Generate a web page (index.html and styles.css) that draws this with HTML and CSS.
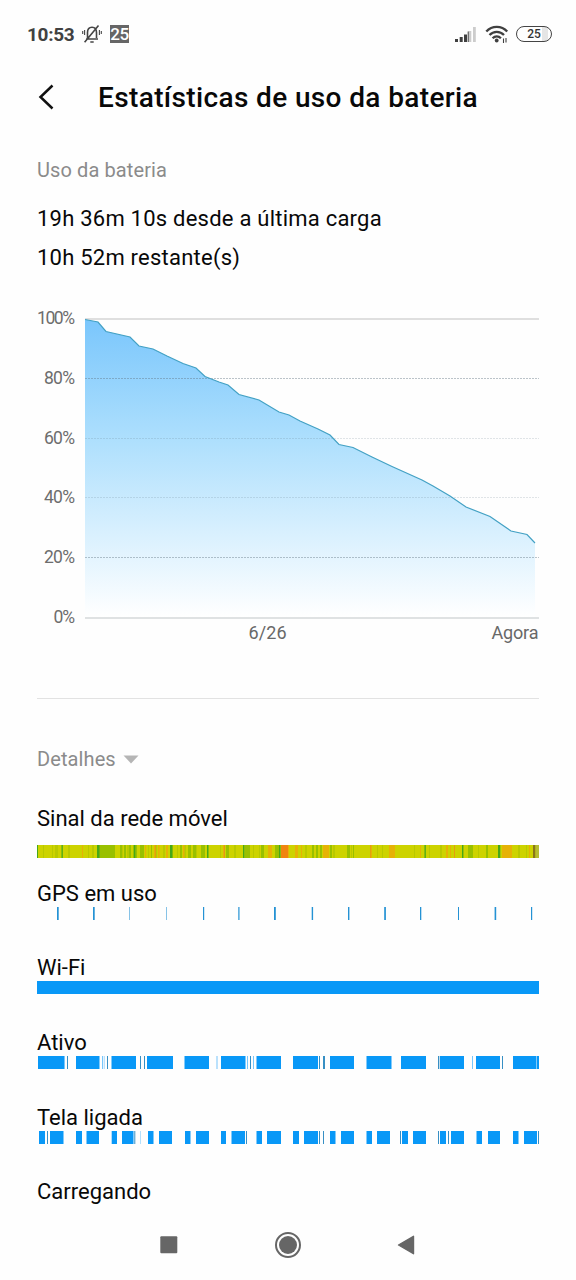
FILE: index.html
```html
<!DOCTYPE html>
<html lang="pt-BR">
<head>
<meta charset="utf-8">
<title>Estatísticas de uso da bateria</title>
<link rel="stylesheet" href="styles.css">
</head>
<body>
<div class="screen">
  <header class="status">
    <span class="clock">10:53</span>
    <svg class="bell" width="20" height="20" viewBox="0 0 20 20" fill="none" stroke="#454545" stroke-width="1.6">
      <path d="M4 15h12M5.500 14V8.500C5.500 5 7.300 3.200 10 3.200s4.500 1.800 4.500 5.300V14M8.300 18h3.400M2.600 18.300L16.500 1.500"/>
      <path d="M2.600 6v5M.7 7v3M17.400 6v5M19.300 7v3" stroke-width="1.100"/>
    </svg>
    <span class="count">25</span>
    <svg class="signal" width="22" height="18" viewBox="0 0 22 18">
      <path d="M0 17v-3h3v3zM4.700 17v-5h3v5zM9 17V9.500h3V17z" fill="#404040"/>
      <path d="M13.500 17V6h2.800v11zM18 17V2h2.800v15z" fill="#ccc"/>
      <path d="M12.700 17V6.500h1V17z" fill="#404040"/>
    </svg>
    <svg class="wifi" width="24" height="20" viewBox="0 0 24 20" fill="none" stroke="#404040" stroke-width="2.300">
      <path d="M1.300 7.500C7 1.200 16.500 1.200 22.200 7.500M4.500 11C8.500 6.700 15 6.700 19 11M7.600 14.200C10 11.700 13.500 11.700 15.900 14.200"/>
      <circle cx="11.700" cy="16.500" r="1.900" fill="#404040" stroke="none"/>
      <path d="M18.500 14.500v4.500M21 14v4.500" stroke-width="1.100"/>
    </svg>
    <span class="battery">25</span>
  </header>

  <div class="titlebar">
    <svg class="back" width="16" height="26" viewBox="0 0 16 26" fill="none" stroke="#111" stroke-width="2.500"><path d="M14.500 1.500L2.500 13l12 11.500"/></svg>
    <h1 class="title">Estatísticas de uso da bateria</h1>
  </div>

  <main class="content">
    <h2 class="caption">Uso da bateria</h2>
    <p class="info">19h 36m 10s desde a última carga</p>
    <p class="info remaining">10h 52m restante(s)</p>

    <svg class="chart" width="502" height="340" viewBox="37 304 502 340">
      <defs>
        <linearGradient id="fill" x1="0" y1="0" x2="0" y2="1">
          <stop offset="0" stop-color="#7ac6fc"/>
          <stop offset=".4" stop-color="#addffd"/>
          <stop offset="1" stop-color="#fff"/>
        </linearGradient>
      </defs>
      <path d="M85 319H539" stroke="#dfdfdf" stroke-width="1.800"/>
      <path fill="url(#fill)" d="M85 319.500L98 322L106 331.500L130 337L139 346L153 349L167 356L183 363.500L196 368L205 376.500L219 382L228 385L239 394.500L259 400L279 412L289 415L300 421L318 429L330 435L339 444.500L353 447.500L372 457L392 466.500L422 480L433 486L450 496L466 507L490 516.500L511 531L527 534.500L535 543V617H85Z"/>
      <g stroke="#607482" stroke-width="1" stroke-dasharray="2 1">
        <path d="M85 378.500H539" opacity=".42"/>
        <path d="M85 438.500H539M85 497.500H539" opacity=".18"/>
        <path d="M85 557.500H539" opacity=".42"/>
      </g>
      <path d="M85 618H539" stroke="#d5d8da" stroke-width="1.400"/>
      <path fill="none" stroke="#43a1c4" stroke-width="1.200" d="M85 319.500L98 322L106 331.500L130 337L139 346L153 349L167 356L183 363.500L196 368L205 376.500L219 382L228 385L239 394.500L259 400L279 412L289 415L300 421L318 429L330 435L339 444.500L353 447.500L372 457L392 466.500L422 480L433 486L450 496L466 507L490 516.500L511 531L527 534.500L535 543"/>
      <g class="axis" text-anchor="end">
        <text x="75" y="324" textLength="38">100%</text>
        <text x="75" y="384" textLength="31">80%</text>
        <text x="75" y="444" textLength="31">60%</text>
        <text x="75" y="503" textLength="31">40%</text>
        <text x="75" y="563" textLength="31">20%</text>
        <text x="75" y="623" textLength="21.500">0%</text>
      </g>
      <g class="axis dates">
        <text x="248.500" y="638.500" textLength="38">6/26</text>
        <text x="491.500" y="638.500" textLength="47">Agora</text>
      </g>
    </svg>

    <div class="rule"></div>

    <h2 class="caption details">Detalhes <svg width="16" height="9" viewBox="0 0 16 9"><path d="M.5.5h15L8 8.500z" fill="#b5b5b5"/></svg></h2>

    <section class="row spaced">
      <h3 class="label">Sinal da rede móvel</h3>
      <svg class="bar" width="502" height="13" viewBox="37 0 502 13" stroke-width="13" fill="none">
        <path d="M37 6.500H539" stroke="#cdd300"/>
        <path d="M43 6.500h1M52 6.500h1M55 6.500h3M68 6.500h2M88 6.500h1M92 6.500h2M122 6.500h1M127 6.500h2M148 6.500h1M155 6.500h2M163 6.500h2M177 6.500h1M184 6.500h2M196 6.500h1M220 6.500h1M234 6.500h2M253 6.500h1M259 6.500h1M305 6.500h2M333 6.500h2M351 6.500h1M377 6.500h1M382 6.500h1M414 6.500h1M429 6.500h1M440 6.500h2M462 6.500h2M478 6.500h1M518 6.500h2M526 6.500h1" stroke="#b9c900"/>
        <path d="M98 6.500H115M120 6.500h2M124 6.500h2M129 6.500h2M133 6.500h4M140 6.500h4M151 6.500h1M172 6.500h1M180 6.500h2M188 6.500h3M193 6.500h3M201 6.500h4M226 6.500h3M245 6.500h5M261 6.500h3M275 6.500h4M312 6.500h2M316 6.500h2M320 6.500h2M330 6.500h2M347 6.500h3M353 6.500h1M468 6.500h5M486 6.500h2" stroke="#99c000"/>
        <path d="M61.500 6.500h1.300M97 6.500h2.500M134 6.500h1.300M170 6.500h2.300M207 6.500h1.500M243 6.500h1.500M279 6.500h1.500M424.500 6.500h1.300M462 6.500h1.300M498 6.500h2.300M37 6.500h1" stroke="#45a818"/>
        <path d="M82 6.500h1M145 6.500h1M154 6.500h1.500M158 6.500h1.500M166 6.500h2M183 6.500h1.500M223 6.500h1.500M268 6.500h4M287 6.500h2M295 6.500h3M301 6.500h1M323 6.500h6M370 6.500h2M389 6.500h6M420 6.500h1M446 6.500h2M450 6.500h1M454 6.500h1M502 6.500h10M529 6.500h1M533 6.500h1" stroke="#e6b206"/>
        <path d="M281 6.500H288" stroke="#f08410"/>
        <path d="M155 6.500h.8M224 6.500h1M370 6.500h.7M454 6.500h.8" stroke="#e59813"/>
        <path d="M533 6.500h2.500" stroke="#89761b"/>
        <path d="M535.500 6.500h3.500" stroke="#b5bd32"/>
      </svg>
    </section>
    <section class="row">
      <h3 class="label">GPS em uso</h3>
      <svg class="bar" width="502" height="13" viewBox="37 0 502 13" stroke="#2492d4" stroke-width="13" fill="none">
        <path d="M57 6.500h1.700M93 6.500h1.700M203 6.500h1.200M238.300 6.500h1.200M274 6.500h1.800M311.700 6.500h1.400M348 6.500h1.400M384.200 6.500h1.700M420 6.500h1.300M458 6.500h1M494.600 6.500h1.600M531 6.500h1.200"/>
        <path d="M129 6.500h1M166 6.500h1" opacity=".55"/>
      </svg>
    </section>
    <section class="row">
      <h3 class="label">Wi-Fi</h3>
      <div class="bar full"></div>
    </section>
    <section class="row">
      <h3 class="label">Ativo</h3>
      <svg class="bar" width="502" height="13" viewBox="37 0 502 13" stroke="#0998f7" stroke-width="13" fill="none">
        <path d="M38 6.500H64M76 6.500H99.500M111.500 6.500H136M147 6.500H173M184.500 6.500H209M221 6.500H245.500M256.500 6.500H281M293 6.500H318M330 6.500H354M366.500 6.500H391.500M401 6.500H426M440 6.500H464M476 6.500H500M513 6.500H536.500M537 6.500h2"/>
        <path d="M67 6.500h1M107 6.500h1M140 6.500h1M144 6.500h1M250 6.500h1M319 6.500h1M323 6.500h2M438 6.500h1.300M502 6.500h1" stroke="#378fc4"/>
        <path d="M64 6.500h1M102 6.500h1M103.800 6.500h.7M216.500 6.500h1M247 6.500h1M253 6.500h1M472 6.500h1" opacity=".55"/>
      </svg>
    </section>
    <section class="row">
      <h3 class="label">Tela ligada</h3>
      <svg class="bar" width="502" height="13" viewBox="37 0 502 13" stroke="#0998f7" stroke-width="13" fill="none">
        <path d="M39 6.500H45M50 6.500H63.500M76 6.500H82M86.500 6.500H99M112 6.500H117M122 6.500H133.500M148 6.500H153.500M159 6.500H172M185 6.500H190.500M196 6.500H209M221 6.500H226M231.500 6.500H245M256.500 6.500H262M267 6.500H281M293 6.500H299M304 6.500H318M330 6.500H335.500M341 6.500H354M366.500 6.500H372M377 6.500H390M402 6.500H408M413 6.500H426M440 6.500H446M451 6.500H464M476.500 6.500H482M488 6.500H500M513 6.500H518.500M524 6.500H537"/>
        <path d="M47 6.500h1M134.300 6.500h1M246 6.500h1M319 6.500h1M323 6.500h1M400 6.500h1M438 6.500h1M448 6.500h1M538 6.500h1" stroke="#378fc4"/>
        <path d="M140 6.500h1M111 6.500h1" opacity=".3"/>
      </svg>
    </section>
    <section class="row">
      <h3 class="label">Carregando</h3>
    </section>
  </main>

  <nav class="nav">
    <svg width="18" height="18" viewBox="0 0 18 18"><rect x=".3" y=".3" width="17" height="17" rx="1" fill="#666"/></svg>
    <svg class="home" width="28" height="28" viewBox="0 0 28 28"><circle cx="14" cy="14" r="12" fill="none" stroke="#666" stroke-width="2"/><circle cx="14" cy="14" r="9" fill="#666"/></svg>
    <svg width="18" height="20" viewBox="0 0 18 20"><path d="M16.500 1.300v17.400L1.500 10z" fill="#666" stroke="#666" stroke-width="1.400" stroke-linejoin="round"/></svg>
  </nav>
</div>
</body>
</html>
```
FILE: styles.css
```css
* { box-sizing: border-box; }
body { margin: 0; background: #fdfdfd; font-family: Roboto, "Noto Sans", sans-serif; color: #080808; }
h1, h2, h3, p { margin: 0; font-weight: 400; white-space: nowrap; }
svg { display: block; flex: none; }
.screen { width: 576px; height: 1280px; overflow: hidden; display: flex; flex-direction: column; background: #fefefe; }

.status { height: 68px; display: flex; align-items: center; padding: 0 24px 0 27px; flex: none; }
.clock { font-size: 19px; font-weight: 700; color: #414141; width: 55px; letter-spacing: -.3px; }
.bell { margin-right: 8px; }
.count { width: 19px; height: 18px; background: #666; color: #fff; font: 500 17px/18px Roboto, sans-serif; text-align: center; letter-spacing: -.5px; }
.signal { margin-left: auto; margin-right: 8px; }
.wifi { margin-right: 7px; }
.battery { width: 36px; height: 16px; border: 1.500px solid #444; border-radius: 9px; font: 500 12px/14px Roboto, sans-serif; text-align: center; color: #333; background: linear-gradient(90deg, transparent 75%, #e5e5e5 75%, #e5e5e5 90%, transparent 90%); }

.titlebar { height: 58px; display: flex; align-items: center; padding-left: 38px; flex: none; }
.back { margin-right: 44px; }
.title { font-size: 28px; line-height: 40px; font-weight: 500; letter-spacing: .37px; padding-top: 2px; }

.content { padding: 32px 37px 0; height: 1084px; flex: none; }
.caption { font-size: 20px; line-height: 24px; color: #8b8b8b; letter-spacing: .1px; }
.info { font-size: 22px; line-height: 32px; margin-top: 21px; letter-spacing: .23px; }
.remaining { margin-top: 7px; }
.chart { margin-top: 30px; }
.axis { font-size: 17.500px; font-weight: 400; fill: #6d6d6d; }
.dates { font-size: 18px; fill: #686868; }
.rule { height: 1px; margin-top: 54px; background: #e2e2e2; }
.details { margin-top: 48px; display: flex; gap: 7px; align-items: center; }

.row { height: 74.700px; }
.details + .row { margin-top: 33px; }
.label { font-size: 22px; line-height: 26px; padding-top: 2px; }
.spaced .bar { margin-top: 13px; }
.full { height: 13px; background: #0998f7; }

.nav { flex: 1; display: flex; align-items: center; padding-left: 160px; gap: 96px; }
.home { margin-right: -1px; }
```
